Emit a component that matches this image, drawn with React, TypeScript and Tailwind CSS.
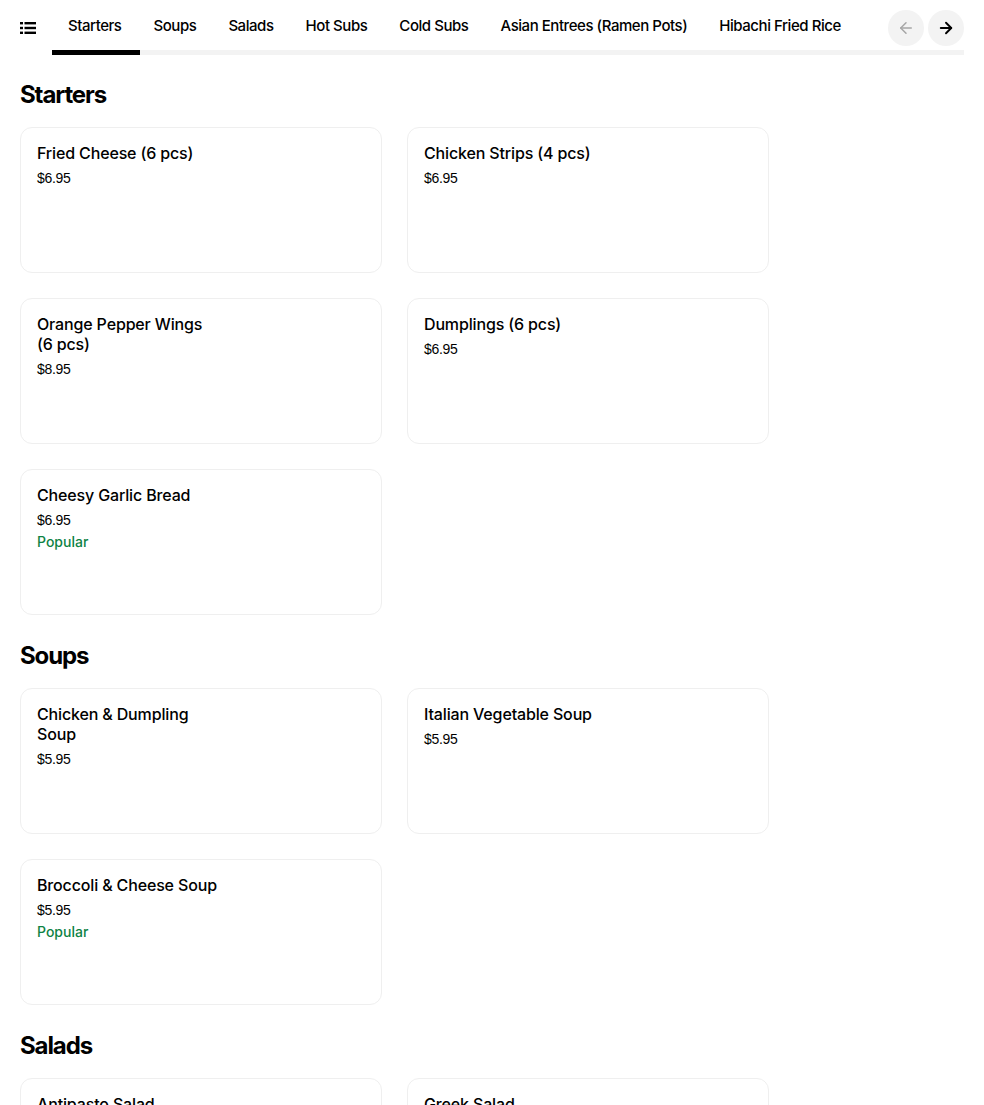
import { ArrowLeft, ArrowRight } from "lucide-react";

type Item = { name: string; price: string; popular?: boolean };

const tabs = [
  "Starters",
  "Soups",
  "Salads",
  "Hot Subs",
  "Cold Subs",
  "Asian Entrees (Ramen Pots)",
  "Hibachi Fried Rice",
  "Wraps",
];

const sections: { title: string; items: Item[] }[] = [
  {
    title: "Starters",
    items: [
      { name: "Fried Cheese (6 pcs)", price: "$6.95" },
      { name: "Chicken Strips (4 pcs)", price: "$6.95" },
      { name: "Orange Pepper Wings (6 pcs)", price: "$8.95" },
      { name: "Dumplings (6 pcs)", price: "$6.95" },
      { name: "Cheesy Garlic Bread", price: "$6.95", popular: true },
    ],
  },
  {
    title: "Soups",
    items: [
      { name: "Chicken & Dumpling Soup", price: "$5.95" },
      { name: "Italian Vegetable Soup", price: "$5.95" },
      { name: "Broccoli & Cheese Soup", price: "$5.95", popular: true },
    ],
  },
  {
    title: "Salads",
    items: [
      { name: "Antipasto Salad", price: "$7.95" },
      { name: "Greek Salad", price: "$7.95" },
    ],
  },
];

function ListIcon() {
  return (
    <svg width="16" height="16" viewBox="0 0 16 16" fill="currentColor">
      <rect x="0" y="2" width="3" height="2.4" />
      <rect x="4.5" y="2" width="11.5" height="2.4" />
      <rect x="0" y="6.8" width="3" height="2.4" />
      <rect x="4.5" y="6.8" width="11.5" height="2.4" />
      <rect x="0" y="11.6" width="3" height="2.4" />
      <rect x="4.5" y="11.6" width="11.5" height="2.4" />
    </svg>
  );
}

function ItemCard({ item }: { item: Item }) {
  return (
    <div className="h-[146px] rounded-xl border border-[#efefef] bg-white px-4 pt-[15px]">
      <div className="max-w-[184px] text-[16px] font-medium leading-5 tracking-[-0.15px] text-black">
        {item.name}
      </div>
      <div className="mt-[5px] font-['Liberation_Sans',sans-serif] text-[14px] leading-5 tracking-[-0.3px] text-black">
        {item.price}
      </div>
      {item.popular && (
        <div className="mt-[2px] text-[14px] font-medium leading-5 text-[#0e8345]">
          Popular
        </div>
      )}
    </div>
  );
}

export default function App() {
  return (
    <div className="min-h-screen bg-white font-['Inter',sans-serif] text-black">
      <nav className="relative flex h-[55px] pl-5 pr-5">
        <div className="flex h-[50px] w-8 items-center pt-[6px]">
          <ListIcon />
        </div>
        <div className="flex flex-1 flex-col overflow-hidden">
          <div className="flex h-[50px] items-center pt-[3px]">
            {tabs.map((t) => (
              <div
                key={t}
                className="flex h-[47px] shrink-0 items-center px-4 text-[15px] font-medium tracking-[-0.45px] whitespace-nowrap"
              >
                {t}
              </div>
            ))}
          </div>
          <div className="h-[5px] bg-[#f3f3f3]">
            <div className="h-[5px] w-[88px] bg-black" />
          </div>
        </div>
        <div className="absolute top-[10px] right-5 flex h-9 gap-1 bg-white pl-[33px]">
          <button className="flex h-9 w-9 items-center justify-center rounded-full bg-[#f3f3f3] text-[#a6a6a6]">
            <ArrowLeft size={18} strokeWidth={2} />
          </button>
          <button className="flex h-9 w-9 items-center justify-center rounded-full bg-[#f3f3f3] text-black">
            <ArrowRight size={18} strokeWidth={2.5} />
          </button>
        </div>
      </nav>
      <main className="px-5 pt-6">
        {sections.map((s, i) => (
          <section key={s.title} className={i > 0 ? "mt-[25px]" : ""}>
            <h2 className="mb-4 h-8 text-[24px] leading-8 font-bold tracking-[-1.1px]">
              {s.title}
            </h2>
            <div className="grid grid-cols-[362px_362px] gap-[25px]">
              {s.items.map((it) => (
                <ItemCard key={it.name} item={it} />
              ))}
            </div>
          </section>
        ))}
      </main>
    </div>
  );
}
